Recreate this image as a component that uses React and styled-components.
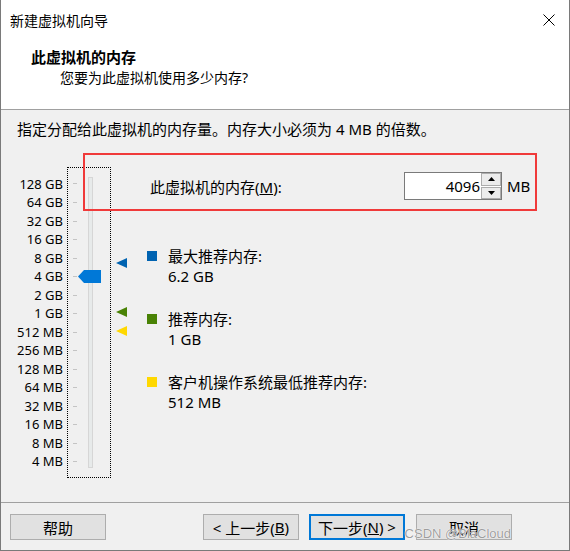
import React from "react";
import styled, { createGlobalStyle } from "styled-components";

const FONT = `"Noto Sans", "Noto Sans CJK SC", sans-serif`;
const ROW = 18.53;
const SCALE_TOP = 185; // centre of first label (page y)
const BOX_TOP = 168;

const scale = [
  "128 GB", "64 GB", "32 GB", "16 GB", "8 GB", "4 GB", "2 GB", "1 GB",
  "512 MB", "256 MB", "128 MB", "64 MB", "32 MB", "16 MB", "8 MB", "4 MB",
];

// log2 of MB -> centre y relative to slider box top
const yFor = (mb) => SCALE_TOP + (17 - Math.log2(mb)) * ROW - BOX_TOP;

const markers = [
  { mb: 6.2 * 1024, color: "#0063b1" },
  { mb: 1024, color: "#498205" },
  { mb: 512, color: "#ffd800" },
];

const GlobalStyle = createGlobalStyle`
  html, body { margin: 0; padding: 0; background: #fff; }
  body { font-family: ${FONT}; }
`;

const Window = styled.div`
  position: relative;
  box-sizing: border-box;
  width: 570px;
  height: 551px;
  display: flex;
  flex-direction: column;
  border: 1px solid #7a7a7a;
  border-top: none;
  background: #f0f0f0;
  font-family: ${FONT};
  color: #000;
`;

const TitleBar = styled.div`
  height: 40px;
  flex: none;
  display: flex;
  align-items: center;
  justify-content: space-between;
  padding: 0 14px 0 9px;
  background: #fff;
  font-size: 14px;
`;

const Header = styled.div`
  height: 70px;
  flex: none;
  box-sizing: border-box;
  padding: 7px 0 0 30px;
  background: #fff;
  border-bottom: 1px solid #a0a0a0;
`;

const HeaderTitle = styled.div`
  font-size: 15px;
  font-weight: bold;
  line-height: 20px;
`;

const HeaderSub = styled.div`
  font-size: 14px;
  line-height: 20px;
  margin-top: 1px;
  padding-left: 29px;
`;

const Body = styled.div`
  flex: 1;
  padding-top: 9px;
`;

const Intro = styled.div`
  font-size: 15px;
  line-height: 20px;
  padding-left: 16px;
`;

const Main = styled.div`
  display: flex;
  margin-top: 28px;
  padding-left: 9px;
`;

const Scale = styled.div`
  width: 53px;
  padding-top: ${SCALE_TOP - BOX_TOP - ROW / 2}px;
  text-align: right;
  font-size: 13px;
`;

const ScaleLabel = styled.div`
  height: ${ROW}px;
  line-height: ${ROW}px;
  white-space: nowrap;
`;

const SliderBox = styled.div`
  position: relative;
  box-sizing: border-box;
  width: 44px;
  height: 311px;
  margin-left: 4px;
  border: 1px dotted #000;
  display: flex;
`;

const Ticks = styled.div`
  width: 4px;
  margin-left: 5px;
  padding-top: ${SCALE_TOP - BOX_TOP - 1 - ROW / 2}px;
`;

const Tick = styled.div`
  height: ${ROW}px;
  display: flex;
  align-items: center;
  &::before {
    content: "";
    width: 4px;
    height: 1px;
    background: #c4c4c4;
  }
`;

const Track = styled.div`
  box-sizing: border-box;
  width: 5px;
  height: 291px;
  margin: 9px 0 0 11px;
  background: #e7eaea;
  border: 1px solid #d6d6d6;
`;

const Thumb = styled.svg`
  position: absolute;
  left: 10px;
`;

const Markers = styled.div`
  position: relative;
  width: 11px;
  height: 311px;
  margin-left: 5px;
`;

const Marker = styled.svg`
  position: absolute;
  left: 0;
`;

const Panel = styled.div`
  flex: 1;
  margin-left: 20px;
  padding-top: 5px;
  display: flex;
  flex-direction: column;
`;

const MemoryRow = styled.div`
  display: flex;
  align-items: center;
  height: 28px;
  font-size: 15px;
`;

const MemoryLabel = styled.div`
  width: 257px;
  padding-left: 3px;
  box-sizing: border-box;
`;

const NumberBox = styled.div`
  box-sizing: border-box;
  width: 98px;
  height: 28px;
  display: flex;
  background: #fff;
  border: 1px solid #7a7a7a;
`;

const NumberValue = styled.div`
  flex: 1;
  text-align: right;
  line-height: 26px;
  padding-right: 1px;
`;

const Spin = styled.div`
  width: 20px;
  display: flex;
  flex-direction: column;
  gap: 1px;
`;

const SpinButton = styled.div`
  flex: 1;
  box-sizing: border-box;
  display: flex;
  align-items: center;
  justify-content: center;
  background: #ececec;
  border: 1px solid #adadad;
`;

const Unit = styled.div`
  margin-left: 5px;
`;

const Legend = styled.div`
  margin-top: 46px;
  display: flex;
  flex-direction: column;
  gap: 23px;
  font-size: 15px;
  line-height: 20px;
`;

const LegendItem = styled.div`
  display: flex;
`;

const Swatch = styled.div`
  width: 10px;
  height: 10px;
  margin: 5px 11px 0 0;
  background: ${({ $color }) => $color};
`;

const Footer = styled.div`
  height: 48px;
  flex: none;
  box-sizing: border-box;
  display: flex;
  align-items: flex-start;
  padding: 11px 57px 0 9px;
  border-top: 1px solid #a0a0a0;
`;

const Buttons = styled.div`
  margin-left: auto;
  display: flex;
  gap: 10px;
`;

const Button = styled.div`
  box-sizing: border-box;
  width: 96px;
  height: 26px;
  display: flex;
  align-items: center;
  justify-content: center;
  font-size: 15px;
  background: #e1e1e1;
  border: ${({ $default }) => ($default ? "2px solid #0078d7" : "1px solid #adadad")};
  margin-left: ${({ $extra }) => ($extra ? "1px" : "0")};
`;

const Annotation = styled.div`
  position: absolute;
  left: 82px;
  top: 153px;
  width: 454px;
  height: 58px;
  box-sizing: border-box;
  border: 2px solid #f03a3a;
  pointer-events: none;
`;

const Watermark = styled.div`
  position: absolute;
  right: 58px;
  bottom: 9px;
  font-family: "Liberation Sans", Arial, sans-serif;
  font-size: 13px;
  color: rgba(140, 140, 140, 0.85);
  text-shadow: 0 0 1px #fff, 0 0 1px #fff;
`;

const Arrow = ({ up }) => (
  <svg width="7" height="4" viewBox="0 0 7 4">
    <polygon points={up ? "0,4 3.5,0 7,4" : "0,0 7,0 3.5,4"} fill="#000" />
  </svg>
);

export default function App() {
  const thumbY = yFor(4096) - 1 - 6.5;
  return (
    <>
      <GlobalStyle />
      <Window>
        <TitleBar>
          <span>新建虚拟机向导</span>
          <svg width="12" height="12" viewBox="0 0 12 12">
            <path d="M0.5 0.5 L11.5 11.5 M11.5 0.5 L0.5 11.5" stroke="#000" strokeWidth="1" />
          </svg>
        </TitleBar>
        <Header>
          <HeaderTitle>此虚拟机的内存</HeaderTitle>
          <HeaderSub>您要为此虚拟机使用多少内存?</HeaderSub>
        </Header>
        <Body>
          <Intro>指定分配给此虚拟机的内存量。内存大小必须为 4 MB 的倍数。</Intro>
          <Main>
            <Scale>
              {scale.map((s) => (
                <ScaleLabel key={s}>{s}</ScaleLabel>
              ))}
            </Scale>
            <SliderBox>
              <Ticks>
                {scale.map((s) => (
                  <Tick key={s} />
                ))}
              </Ticks>
              <Track />
              <Thumb width="23" height="13" viewBox="0 0 23 13" style={{ top: thumbY }}>
                <polygon points="0,6.5 6,0 23,0 23,13 6,13" fill="#0078d7" />
              </Thumb>
            </SliderBox>
            <Markers>
              {markers.map((m) => (
                <Marker
                  key={m.mb}
                  width="11"
                  height="10"
                  viewBox="0 0 11 10"
                  style={{ top: yFor(m.mb) - 6.5 }}
                >
                  <polygon points="0,5 11,0 11,10" fill={m.color} />
                </Marker>
              ))}
            </Markers>
            <Panel>
              <MemoryRow>
                <MemoryLabel>
                  此虚拟机的内存(<u>M</u>):
                </MemoryLabel>
                <NumberBox>
                  <NumberValue>4096</NumberValue>
                  <Spin>
                    <SpinButton>
                      <Arrow up />
                    </SpinButton>
                    <SpinButton>
                      <Arrow />
                    </SpinButton>
                  </Spin>
                </NumberBox>
                <Unit>MB</Unit>
              </MemoryRow>
              <Legend>
                <LegendItem>
                  <Swatch $color="#0063b1" />
                  <div>
                    <div>最大推荐内存:</div>
                    <div>6.2 GB</div>
                  </div>
                </LegendItem>
                <LegendItem>
                  <Swatch $color="#498205" />
                  <div>
                    <div>推荐内存:</div>
                    <div>1 GB</div>
                  </div>
                </LegendItem>
                <LegendItem>
                  <Swatch $color="#ffd800" />
                  <div>
                    <div>客户机操作系统最低推荐内存:</div>
                    <div>512 MB</div>
                  </div>
                </LegendItem>
              </Legend>
            </Panel>
          </Main>
        </Body>
        <Footer>
          <Button>帮助</Button>
          <Buttons>
            <Button>
              &lt; 上一步(<u>B</u>)
            </Button>
            <Button $default>
              下一步(<u>N</u>) &gt;
            </Button>
            <Button $extra>取消</Button>
          </Buttons>
        </Footer>
        <Annotation />
        <Watermark>CSDN @BlaCloud</Watermark>
      </Window>
    </>
  );
}
